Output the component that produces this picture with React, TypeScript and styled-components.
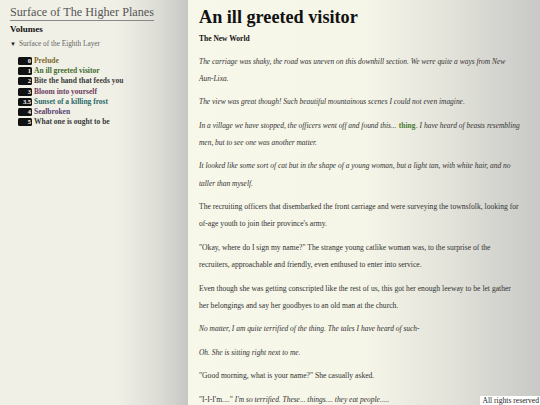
import React from "react";
import styled, { createGlobalStyle } from "styled-components";

const Global = createGlobalStyle`
  html, body { margin: 0; padding: 0; height: 405px; overflow: hidden; }
  body { font-family: "Liberation Serif", "DejaVu Serif", serif; }
`;

const Page = styled.div`
  display: flex;
  height: 405px;
  width: 540px;
  overflow: hidden;
`;

const Sidebar = styled.aside`
  width: 188px;
  flex-shrink: 0;
  box-sizing: border-box;
  padding: 2px 0 0 10px;
  background: linear-gradient(to right, #f0f0e7 0%, #f0f0e7 62%, #dcdcd6 85%, #c6c6c4 100%);
`;

const SiteTitle = styled.h1`
  display: inline-block;
  margin: 0;
  font-size: 12.2px;
  font-weight: 400;
  color: #555;
  line-height: 16px;
  border-bottom: 1px solid #888;
`;

const SectionTitle = styled.h2`
  margin: 2px 0 0;
  font-size: 9px;
  font-weight: 700;
  color: #111;
  line-height: 12px;
`;

const Layer = styled.div`
  margin-top: 4px;
  font-size: 7.3px;
  color: #666;
  line-height: 10px;
  display: flex;
  align-items: center;
  gap: 3px;
`;

const Caret = styled.span`
  font-size: 6px;
  color: #222;
`;

const ChapterList = styled.ul`
  list-style: none;
  margin: 8px 0 0 8px;
  padding: 0;
  display: flex;
  flex-direction: column;
  gap: 2.2px;
`;

const ChapterRow = styled.li<{ $color: string }>`
  display: flex;
  align-items: center;
  gap: 2px;
  font-size: 7.5px;
  line-height: 8px;
  font-weight: 700;
  color: ${(p) => p.$color};
`;

const Badge = styled.span`
  width: 14px;
  height: 8px;
  box-sizing: border-box;
  background: #111;
  color: #fff;
  border-radius: 1.5px;
  font-size: 6.5px;
  font-weight: 700;
  line-height: 8px;
  text-align: right;
  padding-right: 1px;
  flex-shrink: 0;
`;

const Main = styled.main`
  flex: 1;
  box-sizing: border-box;
  padding: 6px 18px 0 11px;
  background: linear-gradient(to right, #f7f7ea 0%, #f5f5e8 50%, #e2e2da 75%, #c8c8c6 100%);
  color: #333;
`;

const ChapterTitle = styled.h1`
  margin: 0;
  font-size: 18.2px;
  font-weight: 700;
  color: #111;
  line-height: 22px;
`;

const PartTitle = styled.h2`
  margin: 6px 0 0;
  font-size: 7.5px;
  font-weight: 700;
  color: #111;
  line-height: 10px;
`;

const Para = styled.p<{ $italic?: boolean }>`
  margin: 6.3px 0 0;
  font-size: ${(p) => (p.$italic ? "7.45px" : "7.62px")};
  line-height: 17.2px;
  font-style: ${(p) => (p.$italic ? "italic" : "normal")};
  &:first-of-type { margin-top: 8.5px; }
`;

const NoWrap = styled.span`
  white-space: nowrap;
`;

const Upright = styled.span`
  font-style: normal;
`;

const Slanted = styled.span`
  font-style: italic;
  font-size: 7.45px;
`;

const Thing = styled.span`
  font-style: normal;
  font-weight: 700;
  color: #4a7a2e;
  padding: 0 0.5px;
`;

const Footer = styled.div`
  position: fixed;
  right: 0;
  bottom: 0;
  background: #fff;
  color: #222;
  font-size: 7.6px;
  line-height: 9px;
  padding: 0 1px 0 2px;
`;

const chapters = [
  { n: "0", title: "Prelude", color: "#7a6a2e" },
  { n: "1", title: "An ill greeted visitor", color: "#3f6b2c" },
  { n: "2", title: "Bite the hand that feeds you", color: "#3b3b3b" },
  { n: "3", title: "Bloom into yourself", color: "#6e3b5c" },
  { n: "3.5", title: "Sunset of a killing frost", color: "#2f6a6a" },
  { n: "4", title: "Sealbroken", color: "#58406e" },
  { n: "5", title: "What one is ought to be", color: "#3b3b3b" },
];

export default function App() {
  return (
    <Page>
      <Global />
      <Sidebar>
        <SiteTitle>Surface of The Higher Planes</SiteTitle>
        <SectionTitle>Volumes</SectionTitle>
        <Layer>
          <Caret>▼</Caret>
          <span>Surface of the Eighth Layer</span>
        </Layer>
        <ChapterList>
          {chapters.map((c) => (
            <ChapterRow key={c.n} $color={c.color}>
              <Badge>{c.n}</Badge>
              <span>{c.title}</span>
            </ChapterRow>
          ))}
        </ChapterList>
      </Sidebar>
      <Main>
        <ChapterTitle>An ill greeted visitor</ChapterTitle>
        <PartTitle>The New World</PartTitle>
        <Para $italic>
          The carriage was shaky, the road was uneven on this downhill section. We were quite a ways from New{" "}
          <NoWrap>Aun-Lixa.</NoWrap>
        </Para>
        <Para $italic>The view was great though! Such beautiful mountainous scenes I could not even imagine.</Para>
        <Para $italic>
          In a village we have stopped, the officers went off and found this... <Thing>thing</Thing>. I have heard of
          beasts resembling men, but to see one was another matter.
        </Para>
        <Para $italic>
          It looked like some sort of cat but in the shape of a young woman, but a light tan, with white hair, and no
          taller than myself.
        </Para>
        <Para>
          The recruiting officers that disembarked the front carriage and were surveying the townsfolk, looking for
          of-age youth to join their province's army.
        </Para>
        <Para>
          "Okay, where do I sign my name?" The strange young catlike woman was, to the surprise of the recruiters,
          approachable and friendly, even enthused to enter into service.
        </Para>
        <Para>
          Even though she was getting conscripted like the rest of us, this got her enough leeway to be let gather her
          belongings and say her goodbyes to an old man at the church.
        </Para>
        <Para $italic>No matter, I am quite terrified of the thing. The tales I have heard of such-</Para>
        <Para $italic>Oh. She is sitting right next to me.</Para>
        <Para>"Good morning, what is your name?" She casually asked.</Para>
        <Para>
          <Upright>"I-I-I'm...."</Upright> <Slanted>I'm so terrified. These... things.... they eat people.....</Slanted>
        </Para>
      </Main>
      <Footer>All rights reserved</Footer>
    </Page>
  );
}
